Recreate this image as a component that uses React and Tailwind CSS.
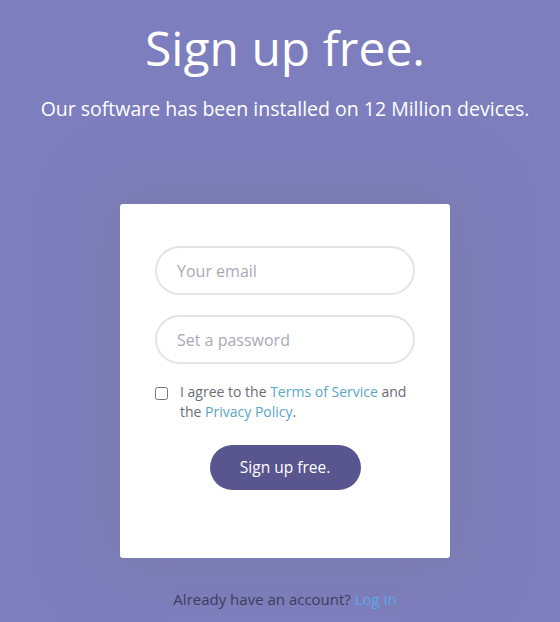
import React from 'react';

const font = { fontFamily: '"Open Sans", Lato, sans-serif' };

export default function App() {
  return (
    <div
      className="relative w-full h-[622px] overflow-hidden bg-[#7d7ebd] flex flex-col items-center pl-[10px]"
      style={font}
    >
      <h1 className="mt-[18px] text-[48px] leading-[60px] text-white font-normal">
        Sign up free.
      </h1>
      <p className="mt-[18px] text-[19.5px] leading-[26px] text-white">
        Our software has been installed on 12 Million devices.
      </p>

      <div className="mt-[82px] w-[330px] h-[354px] bg-white rounded-[3px] shadow-[0_0_60px_20px_rgba(120,120,150,0.35)] px-[35px] pt-[42px]">
        <input
          type="email"
          placeholder="Your email"
          className="block w-full h-[49px] rounded-full border-2 border-[#e3e3e8] px-[20px] text-[16px] text-[#555] placeholder:text-[#a9a9b6] outline-none"
        />
        <input
          type="password"
          placeholder="Set a password"
          className="block mt-[20px] w-full h-[49px] rounded-full border-2 border-[#e3e3e8] px-[20px] text-[16px] text-[#555] placeholder:text-[#a9a9b6] outline-none"
        />
        <div className="mt-[18px] flex items-start gap-[12px] text-[14px] leading-[20px] text-[#6b6b76]">
          <input type="checkbox" className="mt-[5px] w-[13px] h-[13px] shrink-0" />
          <p>
            I agree to the <a className="text-[#5aa6c8]">Terms of Service</a> and
            <br />
            the <a className="text-[#5aa6c8]">Privacy Policy</a>.
          </p>
        </div>
        <div className="mt-[23px] flex justify-center">
          <button className="w-[151px] h-[45px] rounded-full bg-[#58558f] text-white text-[15.5px]">
            Sign up free.
          </button>
        </div>
      </div>

      <p className="mt-[30px] text-[15px] text-[#3d3c5e]">
        Already have an account? <a className="text-[#5ba8e6]">Log in</a>
      </p>

      <div className="absolute left-[480px] top-[614px] w-[400px] h-[200px] rounded-[50%] bg-white"></div>
    </div>
  );
}
